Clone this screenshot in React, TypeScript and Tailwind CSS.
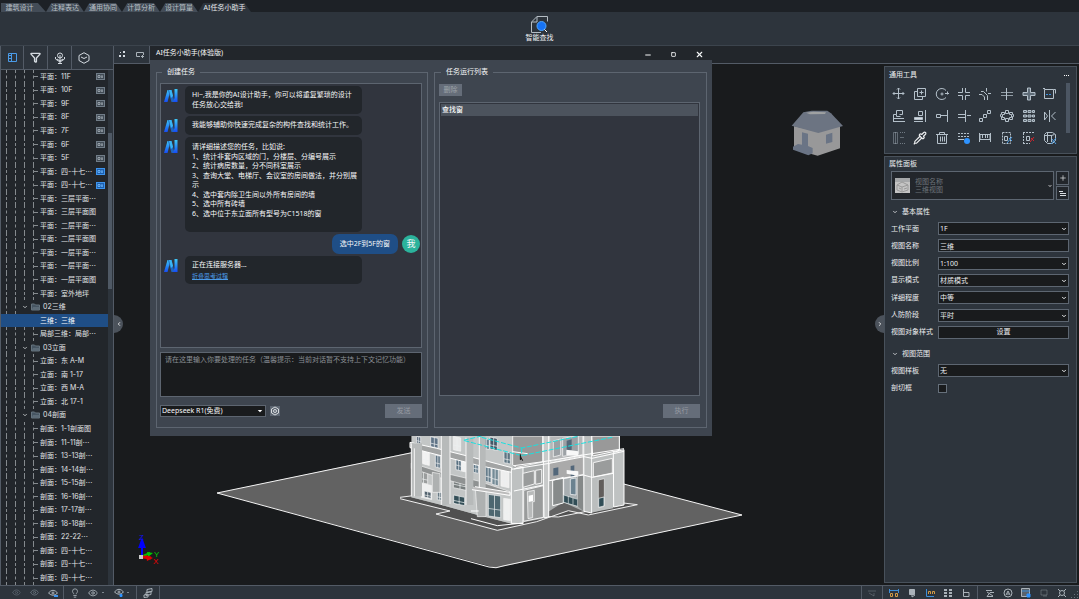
import type { ReactNode } from "react"
import { useState } from "react"
import { ChevronDown, ChevronLeft, ChevronRight, Eye, Filter, Lightbulb, Minus, Pipette, Plus, Square, X } from "lucide-react"

type TreeRow = { label: string; kind: "leaf" | "folder"; badge?: "gray" | "blue" }

const ribbonTabs = ["注释表达", "通用协同", "计算分析", "设计算量"]

const treeRows: TreeRow[] = [
  { label: "平面：11F", kind: "leaf", badge: "gray" },
  { label: "平面：10F", kind: "leaf", badge: "gray" },
  { label: "平面：9F", kind: "leaf", badge: "gray" },
  { label: "平面：8F", kind: "leaf", badge: "gray" },
  { label: "平面：7F", kind: "leaf", badge: "gray" },
  { label: "平面：6F", kind: "leaf", badge: "gray" },
  { label: "平面：5F", kind: "leaf", badge: "gray" },
  { label: "平面：四-十七⋯", kind: "leaf", badge: "blue" },
  { label: "平面：四-十七⋯", kind: "leaf", badge: "blue" },
  { label: "平面：三层平面⋯", kind: "leaf" },
  { label: "平面：三层平面图", kind: "leaf" },
  { label: "平面：二层平面⋯", kind: "leaf" },
  { label: "平面：二层平面图", kind: "leaf" },
  { label: "平面：一层平面⋯", kind: "leaf" },
  { label: "平面：一层平面⋯", kind: "leaf" },
  { label: "平面：一层平面图", kind: "leaf" },
  { label: "平面：室外地坪", kind: "leaf" },
  { label: "02三维", kind: "folder" },
  { label: "三维：三维", kind: "leaf" },
  { label: "局部三维：局部⋯", kind: "leaf" },
  { label: "03立面", kind: "folder" },
  { label: "立面：东 A-M", kind: "leaf" },
  { label: "立面：南 1-17", kind: "leaf" },
  { label: "立面：西 M-A", kind: "leaf" },
  { label: "立面：北 17-1", kind: "leaf" },
  { label: "04剖面", kind: "folder" },
  { label: "剖面：1-1剖面图", kind: "leaf" },
  { label: "剖面：11-11剖⋯", kind: "leaf" },
  { label: "剖面：13-13剖⋯", kind: "leaf" },
  { label: "剖面：14-14剖⋯", kind: "leaf" },
  { label: "剖面：15-15剖⋯", kind: "leaf" },
  { label: "剖面：16-16剖⋯", kind: "leaf" },
  { label: "剖面：17-17剖⋯", kind: "leaf" },
  { label: "剖面：18-18剖⋯", kind: "leaf" },
  { label: "剖面：22-22⋯", kind: "leaf" },
  { label: "剖面：四-十七⋯", kind: "leaf" },
  { label: "剖面：四-十七⋯", kind: "leaf" },
  { label: "剖面：四-十七⋯", kind: "leaf" },
]

const examples = [
  "请详细描述您的任务，比如说:",
  "1、统计非套内区域的门，分楼层、分编号展示",
  "2、统计病房数量，分不同科室展示",
  "3、查询大堂、电梯厅、会议室的房间做法，并分别展示",
  "4、选中套内除卫生间以外所有房间的墙",
  "5、选中所有砖墙",
  "6、选中位于东立面所有型号为C1518的窗",
]

const tools: { name: string; art: ReactNode }[] = [
  { name: "移动", art: <path d="M6.500 1v11M1 6.500h11M5 2.500l1.500-1.500L8 2.500M5 10.500L6.500 12 8 10.500M2.500 5L1 6.500 2.500 8M10.500 5L12 6.500 10.500 8" /> },
  { name: "复制", art: <path d="M4.500 1.500h8v8h-8zM4.500 4.500h-3v8h8v-3M8.500 3.500v4M6.500 5.500h4" /> },
  { name: "旋转", art: <><path d="M11 3.500A5.500 5.500 0 1 0 11 10.500M12.500 4.500v3M10 6.500h4" /><circle cx="7" cy="7" r="1" /></> },
  { name: "修剪", art: <path d="M5.500 1v4.500H1M5.500 13V8.500H1M8.500 1v4.500H13M8.500 13V8.500H13" /> },
  { name: "倒角", art: <path d="M6.500 13v-3L4 7.500H1M9.500 13V8.500L5.500 4.500H3M8.500 1v3.500M10 6.500h3" /> },
  { name: "打断", art: <><path d="M6.500 1v12" /><path d="M1 5.500h12M1 8.500h12" opacity=".75" /></> },
  { name: "连接", art: <path d="M5.500 1v4.500H1v3h4.500V13h3V8.500H13v-3H8.500V1z" fill="#5f6c78" /> },
  { name: "拉伸", art: <><path d="M1.500 2.500h9v9h-9zM0 1.500h2M10.500 2.500h2v4" /><path d="M3 7.500h6" stroke="#3d8ed8" strokeDasharray="2 1" /></> },
  { name: "偏移", art: <path d="M1 12.500h12M1 9.500h11M1.500 12V5.500h3v-4h6v4h-3M4.500 5.500v2h4" /> },
  { name: "对齐", art: <><path d="M12.500 1v12M5.500 2.500h4v4h-4zM1 12.500h9" /><path d="M1.500 8.500h8v2h-8z" fill="#d5dbe1" /></> },
  { name: "延伸", art: <path d="M12.500 1v12M1.500 5.500h4v3h-4zM6 6.500h6" /> },
  { name: "裁剪", art: <path d="M8.500 1v12M1 5.500h7M1 8.500h7M10 6.500h4" /> },
  { name: "路径", art: <path d="M1.500 9.500h3v3h-3zM5.500 5.500h3v3h-3zM9.500 1.500h3v3h-3zM4.500 9.500l1-1M8.500 5.500l1-1" /> },
  { name: "环形阵列", art: <path d="M5.500 1.500h3v3h-3zM5.500 9.500h3v3h-3zM1.500 3.500h3v2h-2v3h2v2h-3v-3h-1v-2h1zM12.500 3.500h-3v2h2v3h-2v2h3v-3h1v-2h-1z" /> },
  { name: "矩形阵列", art: <path d="M1.500 1.500h3v2h-3zM6 1.500h3v2H6zM10.500 1.500h2v2h-2zM1.500 6h3v2h-3zM6 6h3v2H6zM10.500 6h2v2h-2zM1.500 10.500h3v2h-3zM6 10.500h3v2H6zM10.500 10.500h2v2h-2z" fill="#5f6c78" /> },
  { name: "镜像", art: <path d="M6.500 1v12M1.500 3v8L4.500 7zM12.500 3L8.500 7l4 4" /> },
  { name: "拆分", art: <><path d="M1.500 1.500h4v11h-4zM3.500 1v12M8 6.500h4" opacity=".4" /><path d="M8 1.500h5M8 12.500h5" strokeDasharray="1 1" opacity=".5" /></> },
  { name: "吸管", art: <Pipette size={14} /> },
  { name: "删除构件", art: <path d="M1 3.500h12M4.500 3V1.500h5V3M2.500 4v8.500h9V4M5.500 5.500v5M7.500 5.500v5M9.500 5.500v5" /> },
  { name: "图层", art: <><path d="M1 2.500h11M1 5.500h11" strokeDasharray="2 1" /><path d="M1 8.500h6" /><circle cx="10" cy="10" r="3" fill="#2f93ff" stroke="none" /></> },
  { name: "标尺", art: <path d="M1.500 2v9M12.500 2v9M2 3.500h10v5H2zM4.500 4v3M7.500 4v3M9.500 4v3" /> },
  { name: "关联", art: <><path d="M2.500 1.500h8v11h-8z" strokeDasharray="2 1" /><path d="M4.500 5.500h3v4h-3z" /><path d="M7 12l5-6M9 7l3 3" stroke="#4b9be0" /></> },
  { name: "剪切", art: <><path d="M1 1.500h11M1 12.500h7M1.500 2v10" strokeDasharray="2 1" /><path d="M4.500 5.500h3v4h-3z" /><path d="M8 11l4-5M12 10L9 7" stroke="#d0242c" /></> },
  { name: "三维裁剪", art: <><path d="M3.500 1.500h6l3 2v6l-3 3h-5l-3-3v-6zM1.500 4.500h7l3-1M8.500 4v7M4.500 1v10" /><path d="M8 13l5-6M9 8l4 5" stroke="#4b9be0" /></> },
]

const properties = [
  { label: "工作平面", value: "1F", type: "select" },
  { label: "视图名称", value: "三维", type: "text" },
  { label: "视图比例", value: "1:100", type: "select" },
  { label: "显示模式", value: "材质模式", type: "select" },
  { label: "详细程度", value: "中等", type: "select" },
  { label: "人防阶段", value: "平时", type: "select" },
  { label: "视图对象样式", value: "设置", type: "button" },
]

// facade openings: x, y, width, height, colour, vertical skew
const openings: [number, number, number, number, string, number][] = [
  [50, 165, 16, 35, "#566372", 15], [68, 168, 20, 38, "#f2f2f2", 15], [92, 125, 22, 30, "#607487", 13],
  [106, 180, 15, 36, "#617686", 14], [50, 124, 12, 20, "#536374", 12], [160, 124, 22, 40, "#e9eaea", 12],
  [168, 184, 16, 40, "#587080", 14], [184, 188, 13, 40, "#f1f1f1", 12], [220, 196, 15, 36, "#607888", 12],
  [250, 130, 18, 30, "#6c8291", 12], [270, 126, 22, 36, "#465867", 12], [256, 214, 17, 45, "#667d8b", 14],
  [276, 218, 19, 50, "#748b96", 14], [303, 225, 24, 48, "#eeeeee", 13], [312, 170, 19, 33, "#5d7482", 12],
  [58, 228, 25, 34, "#9a9d9d", 12], [64, 265, 31, 42, "#eff0f0", 12], [73, 288, 20, 18, "#53636f", 12],
  [112, 290, 14, 24, "#687984", 12], [160, 248, 40, 30, "#777d7d", 12], [161, 300, 33, 25, "#344f58", 12],
  [265, 298, 37, 65, "#4d6770", 8], [311, 310, 20, 64, "#f0f0f0", 8],
]

function Building() {
  return (
    <g transform="translate(400 395) scale(.33333)">
      <path d="M0 307L40 302 340 360 475 366 565 348 670 324 712 329 565 360 505 347 410 380 292 406 108 357 150 348 0 311" fill="#505050" stroke="#f0f0f0" strokeWidth="3" />
      <path d="M35 110H660V330L575 353 548 348 490 322 445 350V368L340 387 225 358 125 330 34 307z" fill="#a8abab" />
      <path d="M35 110H340V387L225 358 125 330 34 307z" fill="#c3c6c6" />
      {openings.map(([x, y, w, h, fill, skew], i) => (
        <g key={i} transform={`translate(${x} ${y}) skewY(${skew})`}>
          <rect width={w} height={h} fill={fill} stroke="#f4f4f4" strokeWidth="2" />
          <path d={`M${w / 2} 0v${h}M0 ${h * 0.65}h${w}`} stroke="#edf0f1" strokeWidth="2" />
        </g>
      ))}
      <path d="M30 142L110 160 210 185 335 218V232L230 210 130 184 30 158z" fill="#a2a4a4" stroke="#fff" strokeWidth="3" />
      <path d="M34 204L120 231 235 258 330 290V302L225 278 125 250 34 220z" fill="#8f9292" stroke="#f3f3f3" strokeWidth="2" />
      <path d="M34 145H66V304H38zM124 110H150V184L152 327 128 332 125 260zM198 128L220 130V330H198zM238 122H257V358H235z" fill="#b7baba" />
      <path d="M34 145V304M43 160V304M124 110V330M150 110V327M198 128V330M238 122V358" stroke="#f5f5f5" strokeWidth="3" />
      <path d="M97 232L120 236V292H97zM226 280L258 285V365H232z" fill="#aeb1b1" stroke="#f5f5f5" strokeWidth="2" />
      <path d="M338 123H428V201L350 217 338 210z" fill="#999" stroke="#f0f0f0" strokeWidth="3" />
      <path d="M334 223L369 217V386L334 385z" fill="#bec1c1" stroke="#fff" strokeWidth="3" />
      <path d="M369 235L403 227V267L369 277zM407 226L425 223V264L407 268zM371 286L430 272V367L371 379z" fill="#999b9b" stroke="#f1f1f1" strokeWidth="3" />
      <path d="M382 290L403 286V320H398V368L384 371z" fill="#b8baba" stroke="#fff" strokeWidth="2" />
      <path d="M386 302L399 299V318L386 321z" fill="#fff" />
      <path d="M429 110H446V366L432 369z" fill="#c8caca" stroke="#fff" strokeWidth="3" />
      <path d="M449 123H548V179L449 200z" fill="#b5b7b8" stroke="#f4f4f4" strokeWidth="2" />
      <path d="M460 138L482 132V180L460 186zM488 130L535 122V176L488 184z" fill="#9ca1a5" stroke="#fff" strokeWidth="2" />
      <path d="M500 137L515 133V165L500 169z" fill="#536879" />
      <path d="M448 204L550 182V238L448 257z" fill="#aaa" stroke="#fff" strokeWidth="2" />
      <path d="M460 220L475 217V240L460 242zM512 213L523 211V253L512 255z" fill="#53677a" />
      <path d="M500 225L535 229V242L500 236zM499 164L535 169V183L499 180z" fill="#f8f8f8" />
      <path d="M458 256L490 247V324L458 332z" fill="#878b8b" stroke="#fff" strokeWidth="3" />
      <path d="M491 251L533 243V333L491 321z" fill="#a9afb2" stroke="#fff" strokeWidth="2" />
      <path d="M511 252L528 249V300L511 298z" fill="#6b8290" stroke="#fff" strokeWidth="2" />
      <path d="M491 300L533 313V334L491 322z" fill="#314d56" stroke="#dce2e3" strokeWidth="2" />
      <path d="M505 303V325M519 308V329" stroke="#dce2e3" strokeWidth="2" />
      <path d="M533 240L550 244V348L533 334z" fill="#858989" />
      <path d="M575 123H658V166L578 183z" fill="#999" stroke="#fff" strokeWidth="3" />
      <path d="M577 186L640 173V340L577 352z" fill="#bbbebe" />
      <path d="M580 203L637 190V234L580 246z" fill="#9a9c9c" stroke="#f1f1f1" strokeWidth="3" />
      <path d="M595 255L613 251V334L595 338z" fill="#625e5c" stroke="#e5e8e8" strokeWidth="2" />
      <path d="M596 310L612 306V333L596 337z" fill="#314d56" stroke="#fff" strokeWidth="2" />
      <path d="M640 172L672 164V330L641 336z" fill="#bfc2c2" stroke="#fff" strokeWidth="3" />
      <path d="M551 110L575 118V354L552 349z" fill="#bbbebe" stroke="#fff" strokeWidth="3" />
      <path d="M342 212L430 200 550 180 672 161M342 222L448 205 552 185 576 190 672 169M342 288L430 270M448 257L550 240 576 247 640 235M338 170L383 176" fill="none" stroke="#fff" strokeWidth="3" />
      <path d="M225 275L330 292 330 301 216 284" fill="#bbb" stroke="#fff" strokeWidth="3" />
      <path d="M213 348H236M213 371L292 392 370 384" fill="none" stroke="#fff" strokeWidth="3" />
      <path d="M245 123L190 136 365 182 640 126M245 127L365 159 535 124M365 159V182" fill="none" stroke="#19e0df" strokeWidth="3" strokeDasharray="15 5" />
      <path d="M361 178V194L365 191 368 197" fill="#111" stroke="#111" strokeWidth="3" />
    </g>
  )
}

function Viewport() {
  return (
    <svg viewBox="114 64 770 521" className="block h-full w-full" role="img" aria-label="三维视图">
      <path d="M217 493L462.700 441.600 742 515 496 568z" fill="#626262" />
      <path d="M217 493L420 451M217 493L489 567Q496 569 503 566L742 515 620 483" fill="none" stroke="#f4f4f4" />
      <Building />
      <g transform="translate(770 90) scale(.33333)">
        <path d="M72 108L143 125 210 108V175L143 197 72 178z" fill="#989899" />
        <path d="M100 67L125 62H172L183 70 219 108 145 129 65 107z" fill="#6c7482" />
        <path d="M108 68L130 65 168 67 165 72 120 73z" fill="#9fa1a2" />
        <path d="M96 127L114 131V168L128 174V190L115 196 69 179V170L84 162 96 164zM168 134L187 128V156L168 161z" fill="#6a7485" />
      </g>
      <path d="M142 556V543M139.500 547L142 540 144.500 547z" fill="#00f" stroke="#00f" strokeWidth="2" />
      <path d="M143 556L150 553" stroke="#0b0" strokeWidth="2" />
      <path d="M147 552L153 553 148 557z" fill="#00c900" />
      <path d="M143 557L151 558" stroke="#e00000" strokeWidth="3" />
      <path d="M146 555L153 558 147 561z" fill="#e00000" />
      <rect x="139" y="555" width="4" height="4" fill="#c9c9c9" />
      <g fontSize="8" fontFamily="Liberation Sans, sans-serif">
        <text x="139" y="540" fill="#1111ee">Z</text>
        <text x="154" y="557" fill="#00cc00">Y</text>
        <text x="153" y="564" fill="#ee0000">X</text>
      </g>
    </svg>
  )
}

function AiLogo() {
  return (
    <svg viewBox="0 0 14 13" className="mt-[3px] h-[13px] w-[14px] shrink-0">
      <defs>
        <linearGradient id="logo" x1="0" y1="0" x2="0" y2="1">
          <stop offset="0" stopColor="#41c9f5" />
          <stop offset=".55" stopColor="#2586f4" />
          <stop offset="1" stopColor="#174cf5" />
        </linearGradient>
      </defs>
      <path d="M0 13L3.500 1H6.500L3.500 13z" fill="url(#logo)" />
      <path d="M4 1H7.500L10.500 13H7.500z" fill="#1f66c0" />
      <path d="M5 1H7.500L9 7 7 9z" fill="#39b6f3" />
      <path d="M10.500 0H13.500V13H9L10.500 9z" fill="url(#logo)" />
    </svg>
  )
}

function BotMessage({ className, children }: { className: string; children: ReactNode }) {
  return (
    <div className="flex gap-[7px]">
      <AiLogo />
      <div className={`w-[177px] rounded-[5px] bg-[#22262b] pl-[7px] ${className}`}>{children}</div>
    </div>
  )
}

function AssistantWindow() {
  const [draft, setDraft] = useState("")

  return (
    <section className="absolute left-[36px] top-0 flex h-[390px] w-[562px] flex-col bg-[#3e454f] text-[#f7f8f9]">
      <header className="flex h-[14px] shrink-0 items-center bg-[#22262b] px-[6px]">
        <h1 className="flex-1">AI任务小助手(体验版)</h1>
        <div className="flex items-center gap-[17px] pr-[2px] pt-[3px]">
          <button aria-label="最小化"><Minus size={8} strokeWidth={3} /></button>
          <button aria-label="最大化" className="px-[2px]"><Square size={5} strokeWidth={4} /></button>
          <button aria-label="关闭"><X size={9} strokeWidth={3} /></button>
        </div>
      </header>

      <div className="grid min-h-0 flex-1 grid-cols-[272fr_273fr] gap-[6px] pb-[8px] pl-[6px] pr-[5px] pt-[7px]">
        <fieldset className="flex min-h-0 min-w-0 flex-col border border-[#5d6570] pb-[9px] pl-[3px] pr-[5px] pt-[6px]">
          <legend className="ml-[2px] px-[5px] leading-[10px]">创建任务</legend>
          <div className="flex min-h-0 flex-1 flex-col gap-[2px] border border-[#5d6570] bg-[#31353e] pl-[3px] pr-px pt-[2px]">
            <BotMessage className="py-1 pr-[7px] leading-[10px]">Hi~,我是你的AI设计助手，你可以将重复繁琐的设计任务放心交给我!</BotMessage>
            <BotMessage className="h-[19px] py-1 leading-[10px]">我能够辅助你快速完成复杂的构件查找和统计工作。</BotMessage>
            <BotMessage className="pb-[14px] pr-[4px] pt-[5px]">
              <div className="flex h-[76px] flex-col justify-between leading-[9px]">
                {examples.map((line) => (
                  <p key={line}>{line}</p>
                ))}
              </div>
            </BotMessage>
            <div className="flex items-center justify-end gap-[4px]">
              <p className="rounded-[7px] bg-[#1f4e86] px-[8px] py-[5px] leading-[10px]">选中2F到5F的窗</p>
              <span className="flex size-[18px] items-center justify-center rounded-full bg-[#2bb39c] text-[9px]">我</span>
            </div>
            <BotMessage className="h-[28px] pt-1 leading-[10px]">
              <p>正在连接服务器...</p>
              <a href="#thinking" className="block text-[6px] leading-[12px] text-[#4b9be8] underline">折叠思考过程</a>
            </BotMessage>
          </div>
          <textarea
            aria-label="任务内容"
            value={draft}
            onChange={(e) => setDraft(e.target.value)}
            placeholder="请在这里输入你要处理的任务（温馨提示：当前对话暂不支持上下文记忆功能）"
            className="mt-1 h-[45px] shrink-0 resize-none border border-[#5d6570] bg-[#191b1d] px-[4px] py-[2px] leading-[10px] placeholder:text-[#8b9096]"
          />
          <div className="mt-[7px] flex h-[14px] shrink-0 items-center">
            <div className="relative">
              <select aria-label="模型" className="block h-[12px] w-[106px] appearance-none border border-[#5d6570] bg-[#191b1d] px-px leading-[10px]">
                <option>Deepseek R1(免费)</option>
              </select>
              <svg viewBox="0 0 6 4" className="pointer-events-none absolute right-[3px] top-[5px] h-[3px] w-[6px]"><path d="M0 0h6L3 3z" fill="#fff" /></svg>
            </div>
            <button aria-label="设置" className="ml-[4px] flex size-[10px] items-center justify-center bg-[#5d6672]">
              <svg viewBox="0 0 10 10" className="size-[10px]" fill="none" stroke="#d6d9dc"><path d="M5 1L8.500 3v4L5 9 1.500 7V3z" /><circle cx="5" cy="5" r="1.500" /></svg>
            </button>
            <button className="ml-auto h-[14px] w-[37px] bg-[#656d79] text-[#959aa2]">发送</button>
          </div>
        </fieldset>

        <fieldset className="flex min-h-0 min-w-0 flex-col border border-[#5d6570] pb-[9px] pl-[4px] pr-[6px] pt-[7px]">
          <legend className="ml-[2px] px-[5px] leading-[10px]">任务运行列表</legend>
          <button className="h-[12px] w-[23px] bg-[#656d79] text-[#9ea3aa]">删除</button>
          <div className="mt-[6px] min-h-0 flex-1 border border-[#5d6570] bg-[#31353e] p-px">
            <table className="w-full">
              <thead>
                <tr><th className="h-[12px] bg-[#4c535d] px-px text-left font-medium leading-[10px]">查找窗</th></tr>
              </thead>
            </table>
          </div>
          <button className="mt-[8px] h-[14px] w-[37px] shrink-0 self-end bg-[#656d79] text-[#959aa2]">执行</button>
        </fieldset>
      </div>
    </section>
  )
}

function ProjectTree() {
  const [selected, setSelected] = useState(18)

  return (
    <aside className="flex w-[114px] shrink-0 flex-col border-x border-[#535b66] bg-[#22262b]">
      <div className="grid h-[24px] shrink-0 grid-cols-[23px_24px_24px_23px_1fr] divide-x divide-[#535b66] border-b border-[#535b66] bg-[#2d343c] text-[#d5dbe1]">
        <button aria-label="项目" className="flex items-center justify-center">
          <svg viewBox="0 0 9 9" className="size-[9px]" fill="none" stroke="#4a9be8"><path d="M.5.5h8v8h-8zM3.500 1v7M1 2.500h2M1 5.500h2" /></svg>
        </button>
        <button aria-label="筛选" className="flex items-center justify-center"><Filter size={11} strokeWidth={3} /></button>
        <button aria-label="族库" className="flex items-center justify-center">
          <svg viewBox="0 0 12 12" className="size-[12px]" fill="none" stroke="currentColor"><circle cx="6" cy="3.500" r="2.500" /><path d="M6 3v8M1.500 5v2L6 10l4.500-3V5M3 7l3 2 3-2M4 11.500h4" /></svg>
        </button>
        <button aria-label="构件" className="flex items-center justify-center">
          <svg viewBox="0 0 12 12" className="size-[12px]" fill="none" stroke="currentColor"><path d="M6 .7L11 3.500v5L6 11.300 1 8.500v-5zM3 5l3 1.500L9 5" /></svg>
        </button>
      </div>
      <div className="flex min-h-0 flex-1">
        <ul className="flex min-w-0 flex-1 flex-col font-['Inter','Noto_Sans_CJK_SC',sans-serif]">
          {treeRows.map((row, i) => {
            const guide = i === selected ? "border-transparent" : "border-[#858a8e]"
            return (
              <li key={i} className="min-h-0 flex-1">
                <button
                  onClick={() => setSelected(i)}
                  className={`flex h-full w-full items-center whitespace-nowrap pl-[5px] text-left ${i === selected ? "bg-[#1f4e86] text-white" : "text-[#e2e5e7]"}`}
                >
                  <span className={`h-full w-[9px] border-l border-dashed ${guide}`} />
                  <span className={`h-full w-[9px] border-l border-dashed ${guide}`} />
                  {row.kind === "folder" ? (
                    <>
                      <ChevronDown size={6} strokeWidth={3} className="-ml-[2px]" />
                      <svg viewBox="0 0 9 8" className="mx-[3px] h-[8px] w-[9px]"><path d="M.5 7V1h3l1 1h4v5z" fill="#465562" stroke="#66747f" /><path d="M.5 7L2 4h7L8 7z" fill="#5c6b77" /></svg>
                    </>
                  ) : (
                    <>
                      <span className={`h-full w-[9px] border-l border-dashed ${guide}`} />
                      <span className={`flex h-full w-[7px] items-center border-l border-dashed ${guide}`}>
                        <span className={`w-[4px] border-t ${guide}`} />
                      </span>
                    </>
                  )}
                  <span>{row.label}</span>
                  {row.badge && (
                    <svg viewBox="0 0 9 7" className="ml-auto mr-[3px] h-[7px] w-[9px] shrink-0">
                      <rect x=".5" y=".5" width="8" height="6" fill={row.badge === "blue" ? "#1d5fae" : "#414b55"} stroke={row.badge === "blue" ? "#3d94ee" : "#717d88"} />
                      <path d="M2 2.500h2v2H2zM5 4h2M6 2v3" fill="none" stroke={row.badge === "blue" ? "#67b0f5" : "#98a2ab"} />
                    </svg>
                  )}
                </button>
              </li>
            )
          })}
        </ul>
        <div className="w-[5px] bg-[#2d343c] pt-[63px]"><div className="h-[156px] w-[4px] bg-[#4f5965]" /></div>
      </div>
    </aside>
  )
}

function Select({ id, value }: { id: string; value: string }) {
  return (
    <div className="relative">
      <select id={id} className="block h-[13px] w-full appearance-none border border-[#5d6671] bg-[#191b1d] px-px leading-[11px]">
        <option>{value}</option>
      </select>
      <ChevronDown size={6} strokeWidth={4} className="pointer-events-none absolute right-[2px] top-[4px]" />
    </div>
  )
}

function SidePanels() {
  return (
    <aside className="flex w-[195px] shrink-0 flex-col gap-[2px] bg-[#191b1d] pb-[2px] pr-[2px] pt-[2px] text-[#eceef0]">
      <section className="h-[88px] border border-[#48515b] bg-[#2d343c]">
        <header className="flex h-[16px] items-center justify-between pl-[4px] pr-[7px]">
          <h2>通用工具</h2>
          <button aria-label="更多" className="flex gap-px">
            <i className="size-px bg-white" /><i className="size-px bg-white" /><i className="size-px bg-white" />
          </button>
        </header>
        <div className="flex">
          <div className="grid flex-1 grid-cols-8 pl-[3px]">
            {tools.map((tool) => (
              <button key={tool.name} aria-label={tool.name} className="flex h-[22px] items-center justify-center">
                <svg viewBox="0 0 14 14" className="size-[14px]" fill="none" stroke="#b4c0ca">{tool.art}</svg>
              </button>
            ))}
          </div>
          <div className="ml-[5px] mr-[6px] h-[50px] w-[4px] bg-[#4c5663]" />
        </div>
      </section>

      <section className="min-h-0 flex-1 border border-[#48515b] bg-[#2d343c] pl-[6px] pr-[7px]">
        <h2 className="-ml-[2px] h-[14px] leading-[14px]">属性面板</h2>
        <div className="flex h-[29px] gap-[2px]">
          <button className="flex flex-1 items-center border border-[#5d6671] bg-[#22262b] px-[3px] text-left text-[#6d7379]">
            <svg viewBox="0 0 15 15" className="mr-[5px] size-[15px]"><rect width="15" height="15" fill="#c4c4c4" /><path d="M0 0h15v4H0z" fill="#a6a8aa" /><path d="M2 12V7l5-3 6 3v5l-6 2zM2 7l5 2 6-2M7 9v5M4 10l2 1M9 11l3-1" fill="none" stroke="#999" /></svg>
            <span className="flex-1 leading-[8px]">视图名称<br />三维视图</span>
            <ChevronDown size={4} strokeWidth={5} className="-mr-[2px] text-white" />
          </button>
          <div className="flex w-[13px] flex-col gap-px">
            <button aria-label="新建" className="flex flex-1 items-center justify-center border border-[#5d6671] bg-[#22262b]"><Plus size={8} /></button>
            <button aria-label="管理" className="flex flex-1 items-center justify-center border border-[#5d6671] bg-[#22262b]">
              <svg viewBox="0 0 7 7" className="size-[7px]" stroke="#d9dde1"><path d="M0 1.500h4M1 3.500h6M1 5.500h6" /></svg>
            </button>
          </div>
        </div>
        <h3 className="flex h-[22px] items-center gap-[4px] pl-px pt-px"><ChevronDown size={6} strokeWidth={3} />基本属性</h3>
        <div className="flex h-[117px] flex-col justify-between">
          {properties.map((p, i) => (
            <div key={p.label} className="grid grid-cols-[47px_1fr] items-center">
              <label htmlFor={`prop-${i}`} className="whitespace-nowrap">{p.label}</label>
              {p.type === "select" && <Select id={`prop-${i}`} value={p.value} />}
              {p.type === "text" && <input id={`prop-${i}`} defaultValue={p.value} className="h-[13px] w-full border border-[#5d6671] bg-[#191b1d] px-px" />}
              {p.type === "button" && <button id={`prop-${i}`} className="h-[13px] border border-[#5d6671] bg-[#191b1d]">{p.value}</button>}
            </div>
          ))}
        </div>
        <h3 className="mt-[5px] flex h-[20px] items-center gap-[4px] pl-px"><ChevronDown size={6} strokeWidth={3} />视图范围</h3>
        <div className="grid grid-cols-[47px_1fr] items-center gap-y-[6px]">
          <label htmlFor="template">视图样板</label>
          <Select id="template" value="无" />
          <label htmlFor="section-box">剖切框</label>
          <input id="section-box" type="checkbox" className="size-[9px] appearance-none border border-[#66707b] bg-[#191b1d] checked:bg-[#3d8ed8]" />
        </div>
      </section>
    </aside>
  )
}

function StatusIcon({ name, children }: { name: string; children: ReactNode }) {
  return (
    <button aria-label={name} className="flex w-[18px] items-center justify-center">
      <svg viewBox="0 0 10 10" className="size-[10px]" fill="none" stroke="#aab2b9">{children}</svg>
    </button>
  )
}

function StatusBar() {
  return (
    <footer className="flex h-[14px] shrink-0 items-center border-t border-[#535b66] bg-[#2d343c] text-[#aab2b9]">
      <div className="flex h-full items-center gap-[9px] border-r border-[#535b66] pl-[12px] pr-[5px]">
        <Eye size={9} className="text-[#59636d]" />
        <Eye size={9} className="text-[#6b7782]" />
        <svg viewBox="0 0 10 10" className="size-[10px]" fill="none" stroke="currentColor"><path d="M.5 5Q5-.5 9.500 5 5 9.500.5 5z" /><circle cx="5" cy="5" r="1" /><path d="M6 8h4" stroke="#3d94ee" strokeWidth="2" /></svg>
      </div>
      <div className="flex h-full items-center border-r border-[#535b66] pl-[6px] pr-[7px]">
        <Lightbulb size={10} className="mr-[8px]" />
        <Eye size={10} className="mr-[4px]" />
        <i className="mr-[10px] h-px w-[2px] bg-[#7d868e]" />
        <svg viewBox="0 0 10 10" className="mr-[3px] size-[10px]" fill="none" stroke="currentColor"><path d="M.5 4Q5-1.500 9.500 4 5 8.500.5 4z" /><circle cx="5" cy="4" r="1" /><path d="M6 6.500h2v2H6z" fill="#2f93ff" stroke="#2f93ff" /></svg>
        <i className="h-px w-[2px] bg-[#7d868e]" />
      </div>
      <div className="flex h-full items-center border-r border-[#535b66] px-[6px]">
        <svg viewBox="0 0 10 10" className="size-[10px]" fill="none" stroke="currentColor"><path d="M4 1.500l5-1v3l-5 1zM3 4.500l5-1v3l-5 1zM1 7l4-1v3L1 9.500z" /></svg>
      </div>
      <div className="ml-auto flex h-full items-center border-x border-[#535b66] px-px">
        <StatusIcon name="撤销"><path d="M1 3h8M2 5l5 3M7 5v3" opacity=".3" /></StatusIcon>
      </div>
      <div className="flex h-full items-center border-r border-[#535b66] px-[2px]">
        <StatusIcon name="标注"><path d="M.5 1v4M9.500 1v4M1 2.500h8" stroke="#3d8ed8" /><path d="M1.500 5.500h2v3h-2zM6.500 5.500h2v3h-2z" stroke="#d19a45" /></StatusIcon>
        <StatusIcon name="选择"><path d="M2.500 1.500h5v5h-5z" fill="#aab2b9" /><path d="M5 5v4l3-2" /></StatusIcon>
        <StatusIcon name="坐标"><path d="M1.500 1v7.500H9" stroke="#3d8ed8" /><path d="M3.500 6V3.500h2V6M7.500 6V3.500h2V6" stroke="#d19a45" /></StatusIcon>
        <StatusIcon name="列表"><path d="M1 2h3M1 5h3M1 8h3M6 2h3M6 5h3M6 8h3" strokeWidth="2" /></StatusIcon>
        <StatusIcon name="裁剪"><path d="M2.500 1v7.500H8v-4H3" /></StatusIcon>
      </div>
      <div className="flex h-full items-center pl-[3px]">
        <StatusIcon name="捕捉"><path d="M1 2.500h6M2 4l6 4M9 4.500H5L2 8.500h6" /></StatusIcon>
        <StatusIcon name="自动"><circle cx="5" cy="5" r="4" /><path d="M3 7l2-4 2 4M4 6h2" /></StatusIcon>
        <StatusIcon name="保存"><path d="M.5.5h8v8h-8z" fill="#59636d" /><path d="M1 3h8" stroke="#3d8ed8" /><path d="M6 6h3v3H6z" fill="#2f93ff" stroke="#2f93ff" /></StatusIcon>
        <StatusIcon name="视图"><path d="M2 2h6v5H2zM4 8h4" opacity=".35" /></StatusIcon>
        <StatusIcon name="全屏"><circle cx="5" cy="5" r="2.500" /><path d="M1 1l2 2M9 1L7 3M1 9l2-2M9 9L7 7" /></StatusIcon>
        <svg viewBox="0 0 8 8" className="h-[8px] w-[8px] self-end" fill="#68717b"><path d="M6 0h1v1H6zM3 3h1v1H3zM6 3h1v1H6zM0 6h1v1H0zM3 6h1v1H3zM6 6h1v1H6z" /></svg>
      </div>
    </footer>
  )
}

export default function App() {
  return (
    <div className="flex h-screen flex-col overflow-hidden bg-[#191b1d] font-['Noto_Sans','Noto_Sans_CJK_SC',sans-serif] text-[7px] leading-[10px]">
      <nav className="flex h-[12px] shrink-0 items-end bg-[#1d2126] pl-px text-center leading-[9px] text-[#b9c0c6]">
        <button className="h-[9px] w-[45px] bg-[#434c57] pr-[8px] [clip-path:polygon(0_0,82%_0,100%_100%,0_100%)]">建筑设计</button>
        {ribbonTabs.map((tab) => (
          <button key={tab} className="h-[9px] w-[38px] whitespace-nowrap bg-[#434c57] [clip-path:polygon(14%_0,84%_0,100%_100%,0_100%)]">{tab}</button>
        ))}
        <button className="h-[9px] w-[53px] whitespace-nowrap bg-[#2d343c] text-[#e5e8eb] [clip-path:polygon(10%_0,88%_0,100%_100%,0_100%)]">AI任务小助手</button>
      </nav>

      <div className="flex h-[34px] shrink-0 justify-center border-b border-[#3c444d] bg-[#2d343c]">
        <button className="flex flex-col items-center pt-[4px] text-[#f0f2f4]">
          <svg viewBox="0 0 17 17" className="size-[17px]" fill="none" stroke="#b5bdc4"><path d="M6 .5h10.500v5M10 16.500H.5V6L6 .5V6H1" /><circle cx="10.500" cy="10" r="4.500" fill="#1673f5" stroke="#50a5fb" /><path d="M13.500 13.500l2.500 2.500" stroke="#fff" /></svg>
          智能查找
        </button>
      </div>

      <main className="flex min-h-0 flex-1">
        <ProjectTree />
        <div className="relative flex min-w-0 flex-1 flex-col">
          <div className="flex h-[18px] shrink-0 border-b border-[#535b66] bg-[#22262b]">
            <div className="flex w-[36px] items-center justify-center gap-[10px] border-r border-[#535b66] bg-[#2d343c]">
              <svg viewBox="0 0 7 7" className="size-[7px]" fill="#d5dbe1"><path d="M4 0h2v2H4zM0 4h2v2H0zM4 4h2v2H4zM1 1h1v1H1z" /></svg>
              <svg viewBox="0 0 8 7" className="h-[7px] w-[8px]" fill="none" stroke="#aab2b9"><path d="M4 5.500H.5v-4h7V4M5 5.500h3M6.500 4v3" /></svg>
            </div>
          </div>
          <div className="flex min-h-0 flex-1">
            <div className="min-w-0 flex-1"><Viewport /></div>
            <SidePanels />
          </div>
          <AssistantWindow />
          <button aria-label="收起左栏" className="absolute left-0 top-[269px] flex h-[18px] w-[9px] items-center justify-center rounded-r-full bg-[#4b525b] text-white"><ChevronLeft size={6} strokeWidth={3} /></button>
          <button aria-label="收起右栏" className="absolute right-[195px] top-[269px] flex h-[18px] w-[9px] items-center justify-center rounded-l-full bg-[#4b525b] text-white"><ChevronRight size={6} strokeWidth={3} /></button>
        </div>
      </main>

      <StatusBar />
    </div>
  )
}
